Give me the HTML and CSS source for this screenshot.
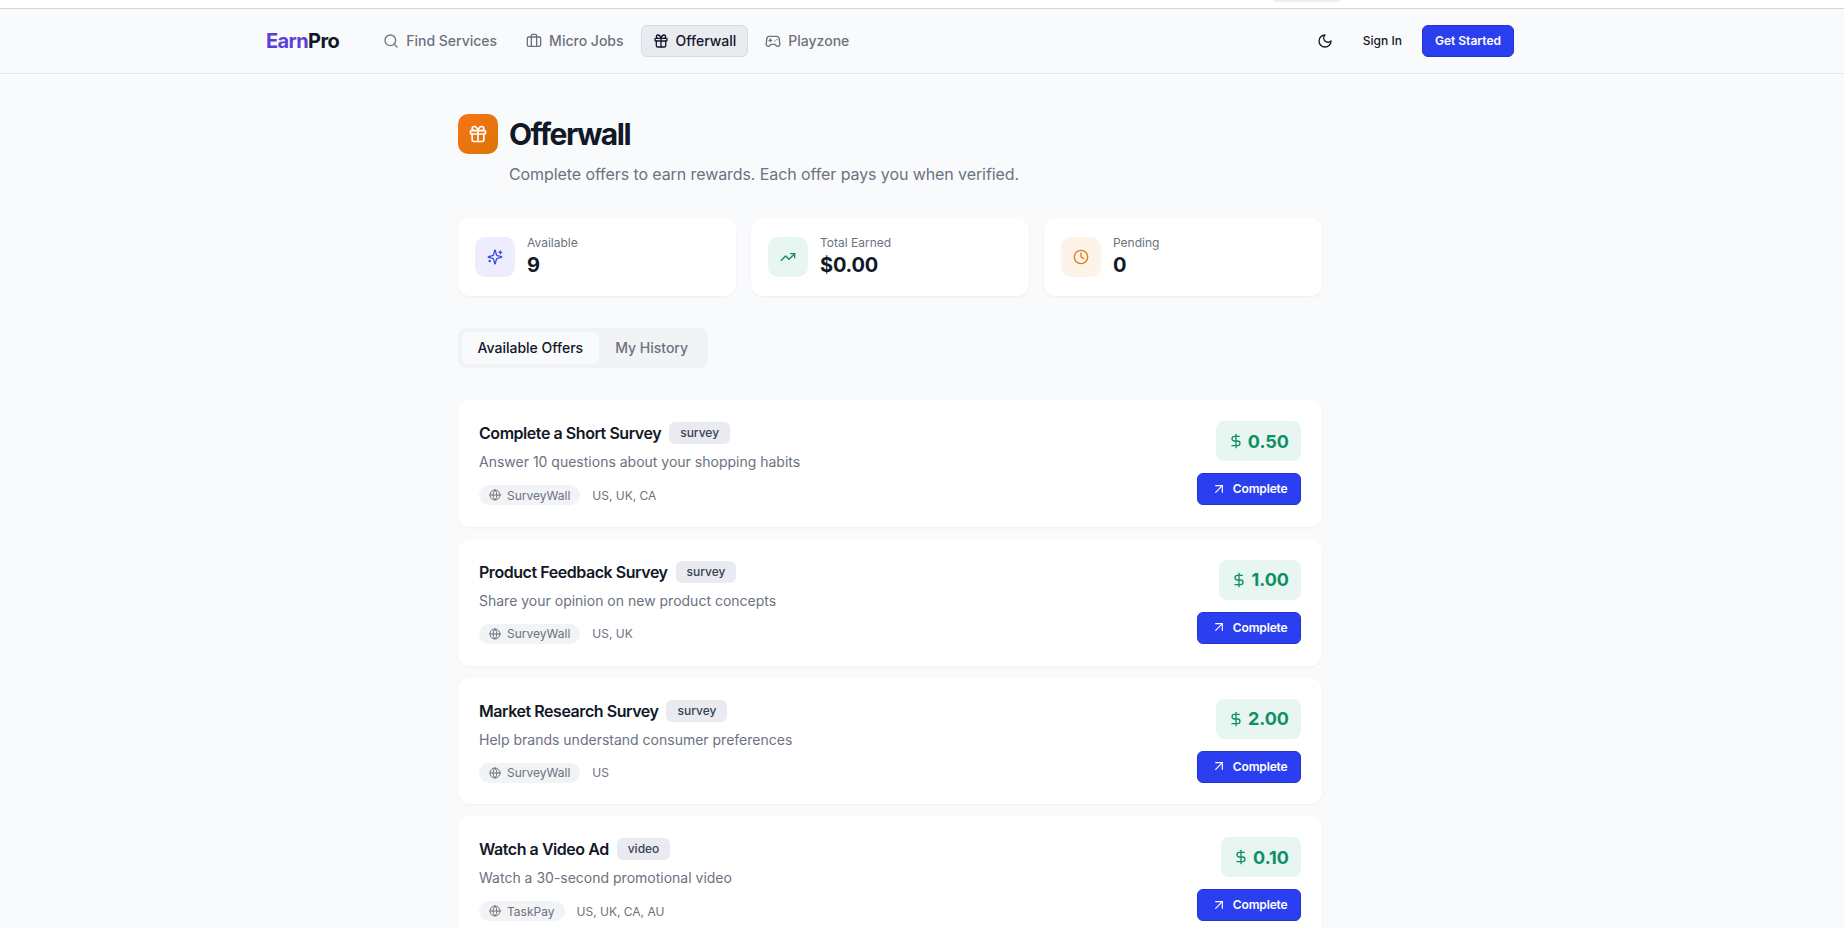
FILE: index.html
```html
<!DOCTYPE html>
<html lang="en">
<head>
  <meta charset="UTF-8" />
  <title>Offerwall - EarnPro</title>
  <link rel="stylesheet" href="styles.css">
</head>
<body>

  <svg class="icon-defs" width="0" height="0">
    <defs>
      <symbol id="i-gift" viewBox="0 0 24 24"><rect x="3" y="8" width="18" height="4" rx="1"/><path d="M12 8v13"/><path d="M19 12v7a2 2 0 0 1-2 2H7a2 2 0 0 1-2-2v-7"/><path d="M7.5 8a2.5 2.5 0 0 1 0-5A4.8 8 0 0 1 12 8a4.8 8 0 0 1 4.5-5 2.5 2.5 0 0 1 0 5"/></symbol>
      <symbol id="i-globe" viewBox="0 0 24 24"><circle cx="12" cy="12" r="10"/><path d="M12 2a14.5 14.5 0 0 0 0 20 14.5 14.5 0 0 0 0-20"/><path d="M2 12h20"/></symbol>
      <symbol id="i-dollar" viewBox="0 0 24 24"><line x1="12" x2="12" y1="2" y2="22"/><path d="M17 5H9.5a3.5 3.5 0 0 0 0 7h5a3.5 3.5 0 0 1 0 7H6"/></symbol>
      <symbol id="i-arrow" viewBox="0 0 24 24"><path d="M7 7h10v10"/><path d="M7 17 17 7"/></symbol>
    </defs>
  </svg>

  <div class="top-strip"><span class="top-tab"></span></div>

  <nav class="navbar">
    <div class="nav-inner">
      <div class="nav-left">
        <div class="logo"><span class="logo-earn">Earn</span>Pro</div>
        <ul class="nav-links">
          <li><a href="#"><svg class="icon" viewBox="0 0 24 24"><circle cx="11" cy="11" r="8"/><path d="m21 21-4.3-4.3"/></svg>Find Services</a></li>
          <li><a href="#"><svg class="icon" viewBox="0 0 24 24"><path d="M16 20V4a2 2 0 0 0-2-2h-4a2 2 0 0 0-2 2v16"/><rect x="2" y="6" width="20" height="14" rx="2"/></svg>Micro Jobs</a></li>
          <li><a href="#" class="active"><svg class="icon"><use href="#i-gift"/></svg>Offerwall</a></li>
          <li><a href="#"><svg class="icon" viewBox="0 0 24 24"><line x1="6" x2="10" y1="11" y2="11"/><line x1="8" x2="8" y1="9" y2="13"/><line x1="15" x2="15.01" y1="12" y2="12"/><line x1="18" x2="18.01" y1="10" y2="10"/><path d="M17.32 5H6.68a4 4 0 0 0-3.978 3.59l-.9 8.1A3 3 0 0 0 4.8 20c1 0 2-.5 2.7-1.3L9 17h6l1.5 1.7c.7.8 1.7 1.3 2.7 1.3a3 3 0 0 0 3-3.3l-.9-8.1A4 4 0 0 0 17.32 5z"/></svg>Playzone</a></li>
        </ul>
      </div>
      <div class="nav-right">
        <svg class="icon moon" viewBox="0 0 24 24"><path d="M12 3a6 6 0 0 0 9 9 9 9 0 1 1-9-9Z"/></svg>
        <a href="#" class="sign-in">Sign In</a>
        <a href="#" class="get-started">Get Started</a>
      </div>
    </div>
  </nav>

  <main class="page">
    <div class="page-head">
      <div class="head-icon"><svg class="icon"><use href="#i-gift"/></svg></div>
      <h1>Offerwall</h1>
    </div>
    <p class="page-sub">Complete offers to earn rewards. Each offer pays you when verified.</p>

    <section class="stats">
      <div class="stat-card">
        <div class="stat-icon stat-blue"><svg class="icon" viewBox="0 0 24 24"><path d="M9.9 15.5A2 2 0 0 0 8.5 14.1l-6.1-1.6a.5.5 0 0 1 0-1l6.1-1.6a2 2 0 0 0 1.4-1.4l1.6-6.1a.5.5 0 0 1 1 0l1.6 6.1a2 2 0 0 0 1.4 1.4l6.1 1.6a.5.5 0 0 1 0 1l-6.1 1.6a2 2 0 0 0-1.4 1.4l-1.6 6.1a.5.5 0 0 1-1 0z"/><path d="M20 3v4"/><path d="M22 5h-4"/><path d="M4 17v2"/><path d="M5 18H3"/></svg></div>
        <div><div class="stat-label">Available</div><div class="stat-value">9</div></div>
      </div>
      <div class="stat-card">
        <div class="stat-icon stat-green"><svg class="icon" viewBox="0 0 24 24"><polyline points="22 7 13.5 15.5 8.5 10.5 2 17"/><polyline points="16 7 22 7 22 13"/></svg></div>
        <div><div class="stat-label">Total Earned</div><div class="stat-value">$0.00</div></div>
      </div>
      <div class="stat-card">
        <div class="stat-icon stat-orange"><svg class="icon" viewBox="0 0 24 24"><circle cx="12" cy="12" r="10"/><polyline points="12 6 12 12 16 14"/></svg></div>
        <div><div class="stat-label">Pending</div><div class="stat-value">0</div></div>
      </div>
    </section>

    <div class="tabs">
      <button class="tab active">Available Offers</button>
      <button class="tab">My History</button>
    </div>

    <section class="offers">
      <article class="offer">
        <div class="offer-info">
          <div class="offer-title"><h3>Complete a Short Survey</h3><span class="tag">survey</span></div>
          <p class="offer-desc">Answer 10 questions about your shopping habits</p>
          <div class="offer-meta"><span class="provider"><svg class="icon"><use href="#i-globe"/></svg>SurveyWall</span><span>US, UK, CA</span></div>
        </div>
        <div class="offer-side">
          <div class="price"><svg class="icon"><use href="#i-dollar"/></svg>0.50</div>
          <button class="complete"><svg class="icon"><use href="#i-arrow"/></svg>Complete</button>
        </div>
      </article>
      <article class="offer">
        <div class="offer-info">
          <div class="offer-title"><h3>Product Feedback Survey</h3><span class="tag">survey</span></div>
          <p class="offer-desc">Share your opinion on new product concepts</p>
          <div class="offer-meta"><span class="provider"><svg class="icon"><use href="#i-globe"/></svg>SurveyWall</span><span>US, UK</span></div>
        </div>
        <div class="offer-side">
          <div class="price"><svg class="icon"><use href="#i-dollar"/></svg>1.00</div>
          <button class="complete"><svg class="icon"><use href="#i-arrow"/></svg>Complete</button>
        </div>
      </article>
      <article class="offer">
        <div class="offer-info">
          <div class="offer-title"><h3>Market Research Survey</h3><span class="tag">survey</span></div>
          <p class="offer-desc">Help brands understand consumer preferences</p>
          <div class="offer-meta"><span class="provider"><svg class="icon"><use href="#i-globe"/></svg>SurveyWall</span><span>US</span></div>
        </div>
        <div class="offer-side">
          <div class="price"><svg class="icon"><use href="#i-dollar"/></svg>2.00</div>
          <button class="complete"><svg class="icon"><use href="#i-arrow"/></svg>Complete</button>
        </div>
      </article>
      <article class="offer">
        <div class="offer-info">
          <div class="offer-title"><h3>Watch a Video Ad</h3><span class="tag">video</span></div>
          <p class="offer-desc">Watch a 30-second promotional video</p>
          <div class="offer-meta"><span class="provider"><svg class="icon"><use href="#i-globe"/></svg>TaskPay</span><span>US, UK, CA, AU</span></div>
        </div>
        <div class="offer-side">
          <div class="price"><svg class="icon"><use href="#i-dollar"/></svg>0.10</div>
          <button class="complete"><svg class="icon"><use href="#i-arrow"/></svg>Complete</button>
        </div>
      </article>
    </section>
  </main>

</body>
</html>
```

FILE: styles.css
```css
* {
  box-sizing: border-box;
}

html, body {
  height: 100%;
  overflow: hidden;
}

body {
  margin: 0;
  padding: 0;
  font-family: Inter, "Liberation Sans", sans-serif;
  background: #f9fafc;
  color: #111827;
}

a {
  text-decoration: none;
  color: inherit;
}

h1, h3, p, ul {
  margin: 0;
  padding: 0;
}

.icon-defs {
  position: absolute;
}

.icon {
  width: 16px;
  height: 16px;
  flex: none;
  fill: none;
  stroke: currentColor;
  stroke-width: 2;
  stroke-linecap: round;
  stroke-linejoin: round;
}

/* Top strip */
.top-strip {
  height: 9px;
  background: #fff;
  border-bottom: 1px solid #d1d5db;
  position: relative;
}

.top-tab {
  position: absolute;
  left: 1273px;
  top: 0;
  width: 67px;
  height: 2px;
  background: #eeeeee;
  border-radius: 0 0 6px 6px;
}

/* Navbar */
.navbar {
  height: 65px;
  border-bottom: 1px solid #e5e7eb;
  padding-right: 64px;
}

.nav-inner {
  max-width: 1280px;
  height: 100%;
  margin: 0 auto;
  padding: 0 16px;
  display: flex;
  align-items: center;
  justify-content: space-between;
}

.nav-left {
  display: flex;
  align-items: center;
  gap: 32px;
}

.logo {
  font-size: 20px;
  font-weight: 700;
  letter-spacing: -0.6px;
  color: #111827;
}

.logo-earn {
  color: #5b3fd6;
}

.nav-links {
  list-style: none;
  display: flex;
  gap: 5px;
}

.nav-links a {
  display: flex;
  align-items: center;
  gap: 7px;
  height: 32px;
  padding: 0 11px 1px;
  border: 1px solid transparent;
  border-radius: 6px;
  font-size: 14px;
  font-weight: 500;
  color: #6b7280;
}

.nav-links a.active {
  background: #e9ebf0;
  border-color: #d8dbe1;
  color: #111827;
}

.nav-right {
  display: flex;
  align-items: center;
}

.moon {
  color: #111827;
  margin-right: 14px;
}

.sign-in {
  font-size: 12px;
  font-weight: 500;
  padding: 0 20px 1px 16px;
}

.get-started {
  display: flex;
  align-items: center;
  height: 32px;
  padding: 0 12px 1px;
  font-size: 12px;
  font-weight: 600;
  color: #fff;
  background: #2b3ff0;
  border: 1px solid #2234c9;
  border-radius: 6px;
}

/* Page */
.page {
  width: 864px;
  margin-left: 458px;
  padding-top: 40px;
}

.page-head {
  display: flex;
  align-items: center;
  gap: 11px;
}

.head-icon {
  width: 40px;
  height: 40px;
  border-radius: 10px;
  background: linear-gradient(135deg, #f97316, #d97706);
  color: #fff;
  display: flex;
  align-items: center;
  justify-content: center;
}

.head-icon .icon {
  width: 20px;
  height: 20px;
}

h1 {
  font-size: 30px;
  font-weight: 700;
  letter-spacing: -1.5px;
  line-height: 36px;
}

.page-sub {
  margin: 8px 0 32px 51px;
  font-size: 16px;
  line-height: 24px;
  letter-spacing: -0.09px;
  color: #6b7280;
}

/* Stats */
.stats {
  display: grid;
  grid-template-columns: repeat(3, 1fr);
  gap: 15px;
  margin-bottom: 32px;
}

.stat-card {
  height: 78px;
  display: flex;
  align-items: center;
  gap: 12px;
  padding: 0 17px;
  background: #fff;
  border-radius: 12px;
  box-shadow: 0 1px 3px rgba(17, 24, 39, 0.05);
}

.stat-icon {
  width: 40px;
  height: 40px;
  border-radius: 10px;
  display: flex;
  align-items: center;
  justify-content: center;
}

.stat-blue { background: #eceefd; color: #3b48e0; }
.stat-green { background: #e7f6f1; color: #138a63; }
.stat-orange { background: #fdf3e9; color: #d97f1a; }

.stat-label {
  font-size: 12px;
  line-height: 16px;
  color: #6b7280;
}

.stat-value {
  font-size: 20px;
  font-weight: 700;
  letter-spacing: -0.2px;
  line-height: 28px;
}

/* Tabs */
.tabs {
  display: inline-flex;
  gap: 1px;
  padding: 4px;
  margin-bottom: 32px;
  background: #f1f3f5;
  border-radius: 8px;
  vertical-align: top;
}

.tab {
  height: 32px;
  padding: 0 15.5px 2px;
  border: 0;
  border-radius: 6px;
  background: none;
  font-family: inherit;
  font-size: 14px;
  font-weight: 500;
  color: #6b7280;
}

.tab.active {
  background: #f9fafc;
  color: #111827;
}

/* Offers */
.offers {
  display: flex;
  flex-direction: column;
  gap: 12px;
}

.offer {
  height: 126.75px;
  display: flex;
  justify-content: space-between;
  padding: 21px;
  background: #fff;
  border-radius: 12px;
  box-shadow: 0 1px 3px rgba(17, 24, 39, 0.05);
}

.offer-title {
  display: flex;
  align-items: center;
  gap: 8px;
}

h3 {
  font-size: 16px;
  font-weight: 600;
  letter-spacing: -0.45px;
  line-height: 24px;
}

.tag {
  padding: 0 11px;
  height: 22px;
  line-height: 22px;
  border-radius: 6px;
  background: #e9ebf0;
  font-size: 12px;
  font-weight: 500;
  color: #374151;
}

.offer-desc {
  margin-top: 7px;
  font-size: 14px;
  line-height: 20px;
  color: #6b7280;
}

.offer-meta {
  display: flex;
  align-items: center;
  gap: 12px;
  margin-top: 13px;
  font-size: 12px;
  color: #6b7280;
}

.provider {
  display: flex;
  align-items: center;
  gap: 6px;
  height: 20px;
  padding: 0 10px;
  background: #f1f3f5;
  border-radius: 10px;
}

.provider .icon {
  width: 12px;
  height: 12px;
}

.offer-side {
  display: flex;
  flex-direction: column;
  align-items: flex-end;
  gap: 12px;
}

.price {
  display: flex;
  align-items: center;
  gap: 4px;
  height: 40px;
  padding: 0 12px;
  border-radius: 8px;
  background: #e7f6f1;
  color: #0f8f66;
  font-size: 18px;
  font-weight: 700;
}

.complete {
  display: flex;
  align-items: center;
  gap: 6px;
  height: 32px;
  padding: 0 12.5px 1px;
  border: 1px solid #2234c9;
  border-radius: 6px;
  background: #2b3ff0;
  color: #fff;
  font-family: inherit;
  font-size: 12px;
  font-weight: 600;
  letter-spacing: -0.15px;
}

.complete .icon {
  width: 16px;
  height: 16px;
  stroke-width: 1.75;
}
```
